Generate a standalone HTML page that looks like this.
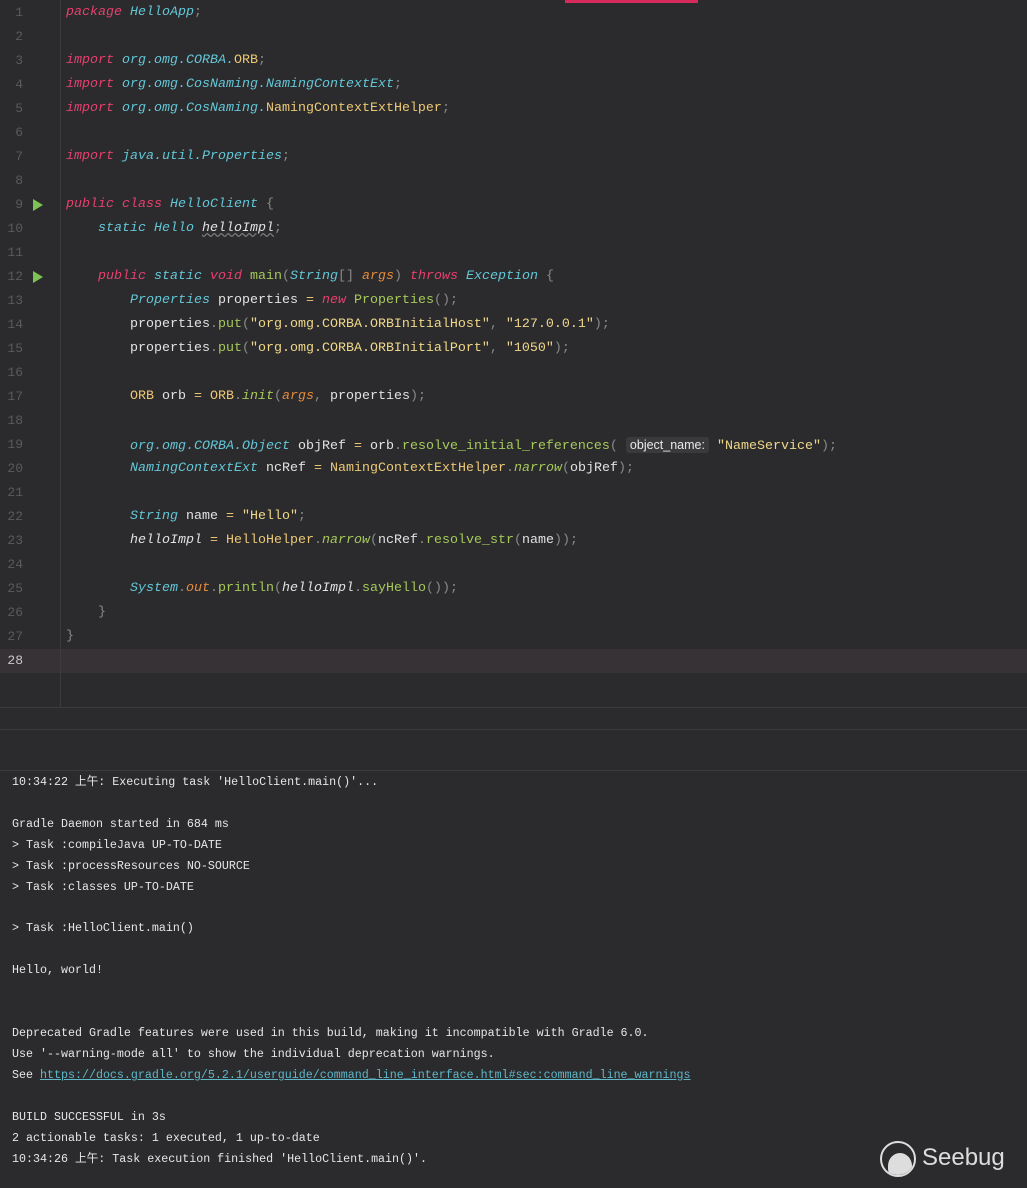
<!DOCTYPE html>
<html><head><meta charset="utf-8"><style>
*{margin:0;padding:0;box-sizing:border-box}
body{width:1027px;height:1188px;background:#2b2b2d;overflow:hidden;position:relative;font-family:"Liberation Mono","Noto Sans CJK SC",monospace}
.ed{position:absolute;left:0;top:0;width:1027px;height:707px;background:#2b2b2d}
.gut{position:absolute;left:60px;top:0;width:1px;height:707px;background:#3c3c3e}
.ln{position:absolute;left:0;width:23px;text-align:right;font-size:13px;color:#5a5a5c;height:24px;line-height:24px}
.cl{position:absolute;left:66px;height:24px;line-height:24px;font-size:13.33px;color:#e2e2e2;white-space:pre}
.k{color:#e5406e;font-style:italic}
.t{color:#63c6d6;font-style:italic}
.y{color:#ecc875}
.g{color:#a6c95a}
.o{color:#e58a3c;font-style:italic}
.s{color:#f0d78a}
.p{color:#8a8a8a}
.eq{color:#ecc875}
.it{font-style:italic}
.hint{background:#3a3a3c;color:#e8e8e8;font-family:"Liberation Sans",sans-serif;font-size:12.5px;padding:1px 4px;border-radius:3px}
.run{position:absolute;left:33px;width:0;height:0;border-top:6px solid transparent;border-bottom:6px solid transparent;border-left:10px solid #7cc254}
.con{position:absolute;left:0;top:770px;width:1027px;height:418px;background:#2b2b2d;border-top:1px solid #3c3c3e}
.cc{position:absolute;left:12px;font-size:11.67px;color:#e6e6e6;white-space:pre;line-height:21px;height:21px}
a{color:#5fb7c8;text-decoration:underline}
</style></head><body>
<div class="ed">
<div style="position:absolute;left:565px;top:0;width:133px;height:3px;background:#d62a5c"></div>
<div style="position:absolute;left:0;top:649px;width:1027px;height:24px;background:#373235"></div>
<div class="gut"></div>
<div class="run" style="top:199px"></div>
<div class="run" style="top:271px"></div>

<div class="ln" style="top:1px">1</div><div class="cl" style="top:1px"><span class="k">package</span> <span class="t">HelloApp</span><span class="p">;</span></div>
<div class="ln" style="top:25px">2</div>
<div class="ln" style="top:49px">3</div><div class="cl" style="top:49px"><span class="k">import</span> <span class="t">org.omg.CORBA.</span><span class="y">ORB</span><span class="p">;</span></div>
<div class="ln" style="top:73px">4</div><div class="cl" style="top:73px"><span class="k">import</span> <span class="t">org.omg.CosNaming.NamingContextExt</span><span class="p">;</span></div>
<div class="ln" style="top:97px">5</div><div class="cl" style="top:97px"><span class="k">import</span> <span class="t">org.omg.CosNaming.</span><span class="y">NamingContextExtHelper</span><span class="p">;</span></div>
<div class="ln" style="top:121px">6</div>
<div class="ln" style="top:145px">7</div><div class="cl" style="top:145px"><span class="k">import</span> <span class="t">java.util.Properties</span><span class="p">;</span></div>
<div class="ln" style="top:169px">8</div>
<div class="ln" style="top:193px">9</div><div class="cl" style="top:193px"><span class="k">public class</span> <span class="t">HelloClient</span> <span class="p">{</span></div>
<div class="ln" style="top:217px">10</div><div class="cl" style="top:217px">    <span class="t">static Hello</span> <span class="it" style="text-decoration:underline wavy #777">helloImpl</span><span class="p">;</span></div>
<div class="ln" style="top:241px">11</div>
<div class="ln" style="top:265px">12</div><div class="cl" style="top:265px">    <span class="k">public</span> <span class="t">static</span> <span class="k">void</span> <span class="g">main</span><span class="p">(</span><span class="t">String</span><span class="p">[]</span> <span class="o">args</span><span class="p">)</span> <span class="k">throws</span> <span class="t">Exception</span> <span class="p">{</span></div>
<div class="ln" style="top:289px">13</div><div class="cl" style="top:289px">        <span class="t">Properties</span> properties <span class="eq">=</span> <span class="k">new</span> <span class="g">Properties</span><span class="p">();</span></div>
<div class="ln" style="top:313px">14</div><div class="cl" style="top:313px">        properties<span class="p">.</span><span class="g">put</span><span class="p">(</span><span class="s">"org.omg.CORBA.ORBInitialHost"</span><span class="p">,</span> <span class="s">"127.0.0.1"</span><span class="p">);</span></div>
<div class="ln" style="top:337px">15</div><div class="cl" style="top:337px">        properties<span class="p">.</span><span class="g">put</span><span class="p">(</span><span class="s">"org.omg.CORBA.ORBInitialPort"</span><span class="p">,</span> <span class="s">"1050"</span><span class="p">);</span></div>
<div class="ln" style="top:361px">16</div>
<div class="ln" style="top:385px">17</div><div class="cl" style="top:385px">        <span class="y">ORB</span> orb <span class="eq">=</span> <span class="y">ORB</span><span class="p">.</span><span class="g it">init</span><span class="p">(</span><span class="o">args</span><span class="p">,</span> properties<span class="p">);</span></div>
<div class="ln" style="top:409px">18</div>
<div class="ln" style="top:433px">19</div><div class="cl" style="top:433px">        <span class="t">org.omg.CORBA.Object</span> objRef <span class="eq">=</span> orb<span class="p">.</span><span class="g">resolve_initial_references</span><span class="p">(</span> <span class="hint">object_name:</span> <span class="s">"NameService"</span><span class="p">);</span></div>
<div class="ln" style="top:457px">20</div><div class="cl" style="top:457px">        <span class="t">NamingContextExt</span> ncRef <span class="eq">=</span> <span class="y">NamingContextExtHelper</span><span class="p">.</span><span class="g it">narrow</span><span class="p">(</span>objRef<span class="p">);</span></div>
<div class="ln" style="top:481px">21</div>
<div class="ln" style="top:505px">22</div><div class="cl" style="top:505px">        <span class="t">String</span> name <span class="eq">=</span> <span class="s">"Hello"</span><span class="p">;</span></div>
<div class="ln" style="top:529px">23</div><div class="cl" style="top:529px">        <span class="it">helloImpl</span> <span class="eq">=</span> <span class="y">HelloHelper</span><span class="p">.</span><span class="g it">narrow</span><span class="p">(</span>ncRef<span class="p">.</span><span class="g">resolve_str</span><span class="p">(</span>name<span class="p">));</span></div>
<div class="ln" style="top:553px">24</div>
<div class="ln" style="top:577px">25</div><div class="cl" style="top:577px">        <span class="t">System</span><span class="p">.</span><span class="o">out</span><span class="p">.</span><span class="g">println</span><span class="p">(</span><span class="it">helloImpl</span><span class="p">.</span><span class="g">sayHello</span><span class="p">());</span></div>
<div class="ln" style="top:601px">26</div><div class="cl" style="top:601px">    <span class="p">}</span></div>
<div class="ln" style="top:625px">27</div><div class="cl" style="top:625px"><span class="p">}</span></div>
<div class="ln" style="top:649px;color:#c8c8c8">28</div>
</div>
<div style="position:absolute;left:0;top:707px;width:1027px;height:1px;background:#3c3c3e"></div>
<div style="position:absolute;left:0;top:729px;width:1027px;height:1px;background:#3c3c3e"></div>
<div class="con">
<div class="cc" style="top:1px">10:34:22 上午: Executing task 'HelloClient.main()'...</div>
<div class="cc" style="top:43px">Gradle Daemon started in 684 ms</div>
<div class="cc" style="top:64px">&gt; Task :compileJava UP-TO-DATE</div>
<div class="cc" style="top:85px">&gt; Task :processResources NO-SOURCE</div>
<div class="cc" style="top:106px">&gt; Task :classes UP-TO-DATE</div>
<div class="cc" style="top:147px">&gt; Task :HelloClient.main()</div>
<div class="cc" style="top:189px">Hello, world!</div>
<div class="cc" style="top:252px">Deprecated Gradle features were used in this build, making it incompatible with Gradle 6.0.</div>
<div class="cc" style="top:273px">Use '--warning-mode all' to show the individual deprecation warnings.</div>
<div class="cc" style="top:294px">See <a>https://docs.gradle.org/5.2.1/userguide/command_line_interface.html#sec:command_line_warnings</a></div>
<div class="cc" style="top:336px">BUILD SUCCESSFUL in 3s</div>
<div class="cc" style="top:357px">2 actionable tasks: 1 executed, 1 up-to-date</div>
<div class="cc" style="top:378px">10:34:26 上午: Task execution finished 'HelloClient.main()'.</div>
</div>
<div style="position:absolute;left:880px;top:1141px;width:36px;height:36px;border:2px solid #ddd;border-radius:50%;overflow:hidden">
<div style="position:absolute;left:6px;top:10px;width:24px;height:26px;background:#ddd;border-radius:50% 50% 40% 40%"></div>
</div>
<div style="position:absolute;left:922px;top:1144px;font-family:'Liberation Sans',sans-serif;font-size:24px;color:#ddd">Seebug</div>
</body></html>
